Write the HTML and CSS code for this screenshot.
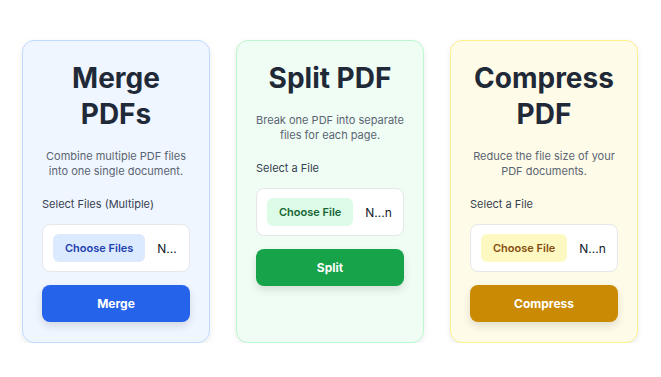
FILE: index.html
```html
<!DOCTYPE html>
<html lang="en">
<head>
<meta charset="utf-8">
<title>PDF Tools</title>
<link rel="stylesheet" href="styles.css">
</head>
<body>
	<div class="tools">
		<div class="card card-blue">
			<h2>Merge PDFs</h2>
			<p class="desc">Combine multiple PDF files into one single document.</p>
			<label class="label">Select Files (Multiple)</label>
			<div class="file">
				<span class="pick">Choose Files</span><span class="none">N...</span>
			</div>
			<button class="go">Merge</button>
		</div>
		<div class="card card-green">
			<h2>Split PDF</h2>
			<p class="desc">Break one PDF into separate files for each page.</p>
			<label class="label">Select a File</label>
			<div class="file">
				<span class="pick">Choose File</span><span class="none">N...n</span>
			</div>
			<button class="go">Split</button>
		</div>
		<div class="card card-yellow">
			<h2>Compress PDF</h2>
			<p class="desc">Reduce the file size of your PDF documents.</p>
			<label class="label">Select a File</label>
			<div class="file">
				<span class="pick">Choose File</span><span class="none">N...n</span>
			</div>
			<button class="go">Compress</button>
		</div>
	</div>
</body>
</html>
```

FILE: styles.css
```css
*{
	margin:0;
	padding:0;
	box-sizing:border-box;
}
body{
	background:#fff;
	font-family:Inter,"Noto Sans",sans-serif;
	color:#1f2937;
}
.tools{
	display:grid;
	grid-template-columns:repeat(3,188px);
	gap:26px;
	padding:40px 0 0 22px;
}
.card{
	border:1.5px solid #bfdbfe;
	border-radius:12px;
	padding:19px 19px 20px;
	display:flex;
	flex-direction:column;
	box-shadow:0 2px 6px rgba(0,0,0,0.08);
}
.card h2{
	font-size:28px;
	line-height:36px;
	font-weight:700;
	text-align:center;
	color:#1f2937;
	margin-bottom:17px;
}
.desc{
	font-size:11px;
	line-height:15px;
	color:#5b6472;
	text-align:center;
	margin-bottom:18px;
}
.label{
	font-size:11px;
	line-height:15px;
	color:#374151;
	margin-bottom:12px;
}
.file{
	height:48px;
	background:#fff;
	border:1px solid #e5e7eb;
	border-radius:8px;
	display:flex;
	align-items:center;
	padding:0 10px;
	font-size:12px;
	white-space:nowrap;
	overflow:hidden;
	margin-bottom:13px;
}
.pick{
	display:inline-block;
	height:28px;
	line-height:28px;
	padding:0 12px;
	border-radius:6px;
	font-size:11px;
	font-weight:600;
	margin-right:12px;
}
.none{
	color:#111827;
}
.go{
	height:37px;
	border:none;
	border-radius:8px;
	color:#fff;
	font-family:inherit;
	font-size:12px;
	font-weight:700;
	box-shadow:0 4px 8px rgba(0,0,0,0.12);
}
.card-blue{
	background:#eff6ff;
	border-color:#bfdbfe;
}
.card-blue .pick{
	background:#dbeafe;
	color:#1e40af;
}
.card-blue .go{
	background:#2563eb;
}
.card-green{
	background:#f0fdf4;
	border-color:#bbf7d0;
}
.card-green .pick{
	background:#dcfce7;
	color:#166534;
}
.card-green .go{
	background:#16a34a;
}
.card-yellow{
	background:#fefce8;
	border-color:#fef08a;
}
.card-yellow .pick{
	background:#fef9c3;
	color:#854d0e;
}
.card-yellow .go{
	background:#ca8a04;
}
```
